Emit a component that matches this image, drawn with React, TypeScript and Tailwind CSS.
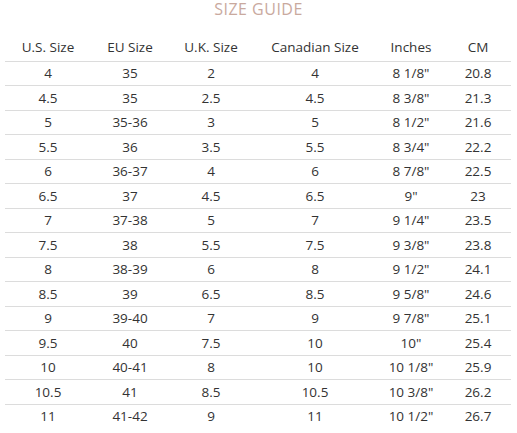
const rows: string[][] = [
  ['4', '35', '2', '4', '8 1/8"', '20.8'],
  ['4.5', '35', '2.5', '4.5', '8 3/8"', '21.3'],
  ['5', '35-36', '3', '5', '8 1/2"', '21.6'],
  ['5.5', '36', '3.5', '5.5', '8 3/4"', '22.2'],
  ['6', '36-37', '4', '6', '8 7/8"', '22.5'],
  ['6.5', '37', '4.5', '6.5', '9"', '23'],
  ['7', '37-38', '5', '7', '9 1/4"', '23.5'],
  ['7.5', '38', '5.5', '7.5', '9 3/8"', '23.8'],
  ['8', '38-39', '6', '8', '9 1/2"', '24.1'],
  ['8.5', '39', '6.5', '8.5', '9 5/8"', '24.6'],
  ['9', '39-40', '7', '9', '9 7/8"', '25.1'],
  ['9.5', '40', '7.5', '10', '10"', '25.4'],
  ['10', '40-41', '8', '10', '10 1/8"', '25.9'],
  ['10.5', '41', '8.5', '10.5', '10 3/8"', '26.2'],
  ['11', '41-42', '9', '11', '10 1/2"', '26.7'],
];

const headers = ['U.S. Size', 'EU Size', 'U.K. Size', 'Canadian Size', 'Inches', 'CM'];
const widths = ['w-[86px]', 'w-[78px]', 'w-[84px]', 'w-[124px]', 'w-[68px]', 'w-[66px]'];

export default function App() {
  return (
    <div className="w-[517px] h-[433px] bg-white overflow-hidden font-['Open_Sans',sans-serif] text-[#333]">
      <h1 className="text-center text-[16px] leading-[19px] tracking-[0.5px] text-[#c9a99e]">SIZE GUIDE</h1>
      <table className="ml-[5px] border-collapse table-fixed w-[506px] mt-[6px]">
        <thead>
          <tr className="border-b border-[#dcdcdc]">
            {headers.map((h, i) => (
              <th key={h} className={`${widths[i]} h-[36px] pt-[8px] font-normal text-[13.5px] text-center`}>
                {h}
              </th>
            ))}
          </tr>
        </thead>
        <tbody>
          {rows.map((r, ri) => (
            <tr key={ri} className={ri < rows.length - 1 ? 'border-b border-[#dcdcdc]' : ''}>
              {r.map((c, ci) => (
                <td key={ci} className="h-[24.5px] p-0 text-[13.5px] text-center">
                  {c}
                </td>
              ))}
            </tr>
          ))}
        </tbody>
      </table>
    </div>
  );
}
